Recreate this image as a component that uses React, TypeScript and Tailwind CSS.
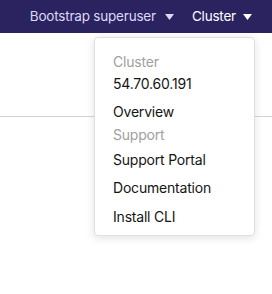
import React from "react";

const Caret = ({ className }: { className?: string }) => (
  <svg width="9" height="6" viewBox="0 0 9 6" className={className}>
    <path d="M0 0 L9 0 L4.5 6 Z" fill="currentColor" />
  </svg>
);

export default function App() {
  return (
    <div className="relative w-[272px] h-[294px] bg-white overflow-hidden" style={{ fontFamily: "Inter, 'Noto Sans', sans-serif" }}>
      <div className="h-[33px] bg-[#2b2260] flex items-center justify-end pr-[20px] text-[13.5px] tracking-[-0.2px]">
        <div className="flex items-center text-[#ddd8f7]">
          <span>Bootstrap superuser</span>
          <Caret className="ml-[9px]" />
        </div>
        <div className="flex items-center text-white ml-[18px]">
          <span>Cluster</span>
          <Caret className="ml-[7px]" />
        </div>
      </div>
      <div className="h-[83px]" />
      <div className="h-px bg-[#d4d4d4]" />
      <div className="absolute left-[94px] top-[37px] w-[161px] bg-white border border-[#e0e0e0] rounded-[4px] shadow-[0_2px_8px_rgba(0,0,0,0.12)] pt-[12px] pb-[8px] pl-[18px] text-[14px] tracking-[-0.2px] text-[#151515]">
        <div className="h-[22px] flex items-center text-[#a0a0a0]">Cluster</div>
        <div className="h-[22px] flex items-center">54.70.60.191</div>
        <div className="h-[22px] mt-[6px] flex items-center">Overview</div>
        <div className="h-[22px] mt-[1px] flex items-center text-[#a0a0a0]">Support</div>
        <div className="h-[22px] mt-[3px] flex items-center">Support Portal</div>
        <div className="h-[22px] mt-[6px] flex items-center">Documentation</div>
        <div className="h-[22px] mt-[7px] flex items-center">Install CLI</div>
      </div>
    </div>
  );
}
